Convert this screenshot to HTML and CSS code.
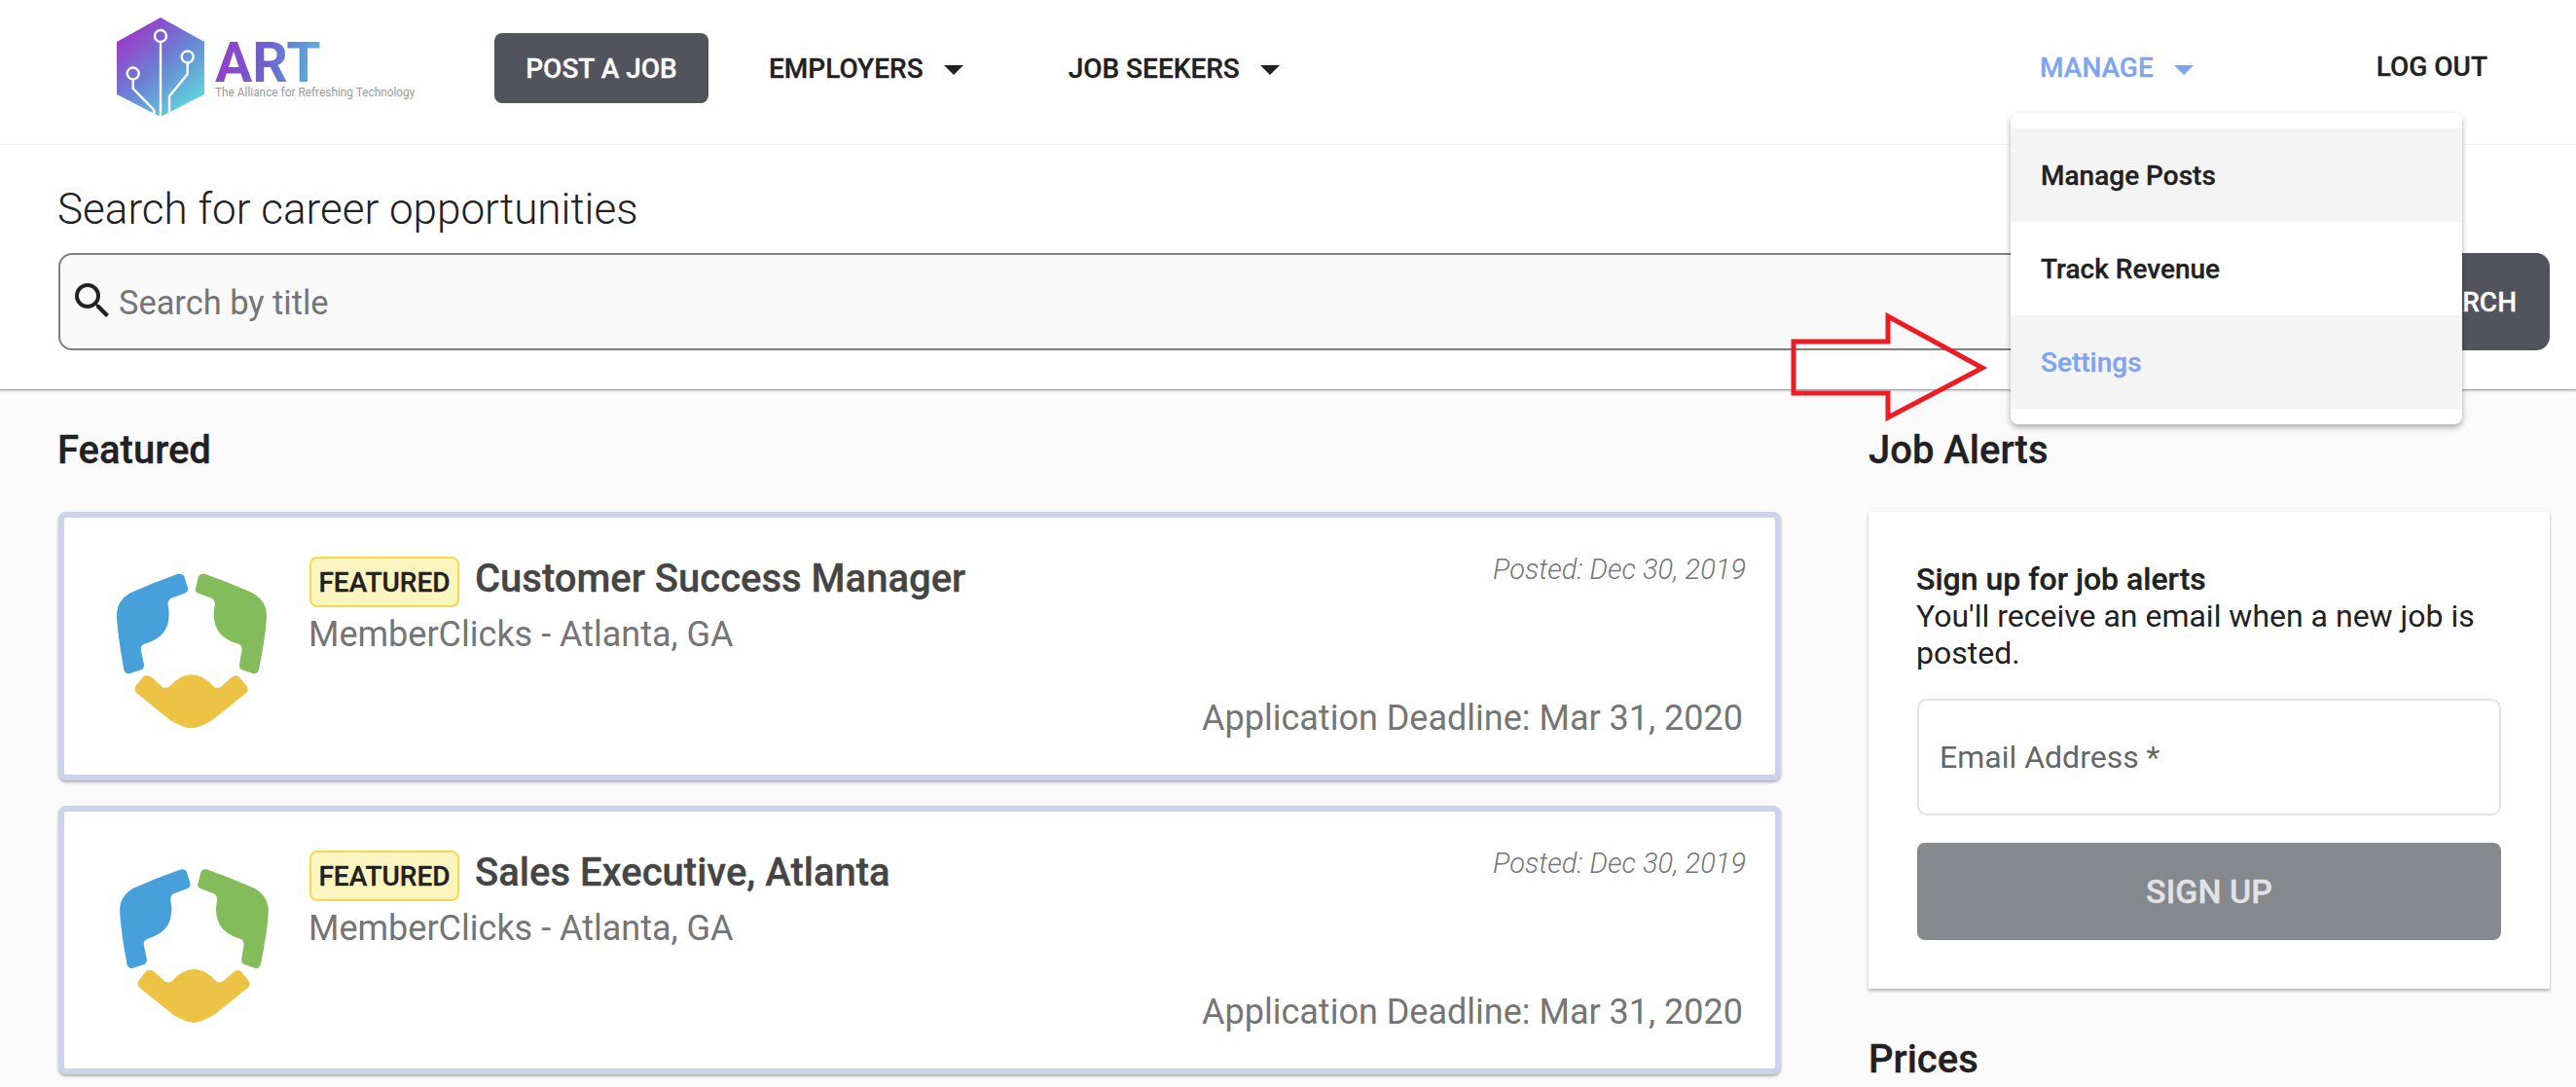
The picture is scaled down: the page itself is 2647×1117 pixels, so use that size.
FILE: index.html
```html
<!DOCTYPE html>
<html lang="en">
<head>
<meta charset="utf-8">
<title>ART Job Board</title>
<link rel="stylesheet" href="styles.css">
</head>
<body>
<svg class="defs" width="0" height="0" aria-hidden="true">
  <defs>
    <linearGradient id="hex" x1="0.1" y1="0.1" x2="0.75" y2="0.95">
      <stop offset="0" stop-color="#a133c6"/>
      <stop offset="0.5" stop-color="#6a7fd3"/>
      <stop offset="1" stop-color="#5fd2dc"/>
    </linearGradient>
    <symbol id="shield" viewBox="70 40 458 474">
      <path fill="#47a0da" d="M255 42Q273 38 277 52L287 85Q289 96 276 101L236 116Q222 124 228 145Q240 232 155 255Q142 260 144 275L153 318Q155 330 145 334L108 346Q96 347 92 335Q72 225 70 170Q68 125 110 100Q180 68 255 42Z"/>
      <path fill="#84bc5c" d="M341 42Q323 38 319 52L311 85Q307 96 320 101L360 116Q374 124 368 145Q356 232 441 255Q454 260 452 275L445 318Q443 330 453 334L488 346Q500 347 504 335Q526 225 528 170Q528 125 486 100Q416 68 341 42Z"/>
      <path fill="#ecc344" d="M152 354Q166 346 180 360L208 386Q220 394 232 384Q262 350 298 349Q335 350 365 384Q376 394 388 386L420 358Q432 348 442 354L468 385Q474 395 466 405L360 490Q320 513 298 513Q275 513 235 490L130 405Q122 395 127 385Z"/>
    </symbol>
  </defs>
</svg>

<header class="topbar">
  <a class="brand" href="#">
    <svg class="brand-mark" viewBox="0 0 90 102">
      <path fill="url(#hex)" d="M45 0L90 25V79L45 102L0 79V25Z"/>
      <g fill="none" stroke="#fff" stroke-width="2.4">
        <circle cx="45" cy="19" r="6"/>
        <circle cx="72.7" cy="40.5" r="6"/>
        <circle cx="16.7" cy="57.5" r="6"/>
        <path d="M45 25V102"/>
        <path d="M72.7 47V58L54 81V98"/>
        <path d="M16.7 64V73L38.3 95V102"/>
      </g>
    </svg>
    <span class="brand-text">
      <span class="brand-name">ART</span>
      <span class="brand-tag">The Alliance for Refreshing Technology</span>
    </span>
  </a>
  <a class="post-btn" href="#">POST A JOB</a>
  <a class="nav-link nav-employers" href="#">EMPLOYERS<i class="caret"></i></a>
  <a class="nav-link nav-seekers" href="#">JOB SEEKERS<i class="caret"></i></a>
  <a class="nav-link nav-manage" href="#">MANAGE<i class="caret"></i></a>
  <a class="nav-link nav-logout" href="#">LOG OUT</a>
</header>

<section class="search-panel">
  <h1 class="search-title">Search for career opportunities</h1>
  <div class="search-row">
    <div class="search-box">
      <svg class="search-icon" viewBox="0 0 24 24"><path fill="#212121" d="M15.5 14h-.79l-.28-.27A6.47 6.47 0 0 0 16 9.5 6.5 6.5 0 1 0 9.5 16c1.61 0 3.09-.59 4.23-1.57l.27.28v.79l5 4.99L20.49 19l-4.99-5zm-6 0C7.01 14 5 11.99 5 9.5S7.01 5 9.5 5 14 7.01 14 9.5 11.99 14 9.5 14z"/></svg>
      <span class="search-placeholder">Search by title</span>
    </div>
    <button class="search-btn">SEARCH</button>
  </div>
</section>

<main class="content">
  <section class="col-main">
    <h2 class="section-title">Featured</h2>
    <article class="job-card">
      <div class="job-logo"><svg class="shield"><use href="#shield"/></svg></div>
      <div class="job-body">
        <div class="job-top">
          <div class="job-heading"><span class="badge">FEATURED</span><span class="job-title">Customer Success Manager</span></div>
          <span class="job-posted">Posted: Dec 30, 2019</span>
        </div>
        <div class="job-org">MemberClicks - Atlanta, GA</div>
        <div class="job-deadline">Application Deadline: Mar 31, 2020</div>
      </div>
    </article>
    <article class="job-card">
      <div class="job-logo job-logo-alt"><svg class="shield shield-alt"><use href="#shield"/></svg></div>
      <div class="job-body">
        <div class="job-top">
          <div class="job-heading"><span class="badge">FEATURED</span><span class="job-title">Sales Executive, Atlanta</span></div>
          <span class="job-posted">Posted: Dec 30, 2019</span>
        </div>
        <div class="job-org">MemberClicks - Atlanta, GA</div>
        <div class="job-deadline">Application Deadline: Mar 31, 2020</div>
      </div>
    </article>
  </section>

  <aside class="col-side">
    <h2 class="section-title">Job Alerts</h2>
    <div class="alert-card">
      <p class="alert-copy"><strong>Sign up for job alerts</strong><br>You'll receive an email when a new job is posted.</p>
      <div class="email-field">Email Address *</div>
      <button class="signup-btn">SIGN UP</button>
    </div>
    <h2 class="section-title prices-title">Prices</h2>
  </aside>
</main>

<nav class="manage-menu">
  <a class="menu-item shaded" href="#">Manage Posts</a>
  <a class="menu-item" href="#">Track Revenue</a>
  <a class="menu-item shaded active" href="#">Settings</a>
</nav>

<svg class="callout" viewBox="0 0 204 112">
  <path fill="none" stroke="#ed1c24" stroke-width="5" d="M3 30H100V4L197 57L100 108V83H3Z"/>
</svg>
</body>
</html>
```
FILE: styles.css
```css
* { box-sizing: border-box; }
html, body { margin: 0; height: 100%; }
body {
  position: relative;
  overflow: hidden;
  background: #fafafa;
  color: #212121;
  font-family: Roboto, "Liberation Sans", sans-serif;
}
a { color: inherit; text-decoration: none; }
.defs { position: absolute; }

/* Medium-weight text renders a little heavier in the reference */
.post-btn, .nav-link, .search-btn, .section-title, .badge, .job-title,
.alert-copy strong, .signup-btn, .menu-item {
  -webkit-text-stroke: .3px currentColor;
}

/* Top bar */
.topbar {
  display: flex;
  align-items: center;
  height: 149px;
  padding-left: 120px;
  background: #fff;
  border-bottom: 1px solid #f4f4f4;
}
.brand { display: flex; align-items: flex-start; width: 388px; height: 102px; margin-top: -11px; }
.brand-mark { width: 90px; height: 102px; flex: none; }
.brand-text { display: flex; flex-direction: column; margin-left: 11px; padding-top: 24px; }
.brand-name {
  font-size: 57px;
  font-weight: 700;
  line-height: 45px;
  width: 110px;
  background: linear-gradient(100deg, #9a3ac8 0%, #6a66d0 50%, #56c0dc 100%);
  -webkit-background-clip: text;
  background-clip: text;
  color: transparent;
}
.brand-tag { font-size: 11.85px; line-height: 16px; color: #9a9a9a; white-space: nowrap; }

.post-btn {
  display: flex;
  align-items: center;
  justify-content: center;
  width: 220px;
  height: 72px;
  margin-top: -8px;
  background: #51545c;
  border-radius: 8px;
  color: #fff;
  font-size: 28px;
  font-weight: 500;
}
.nav-link { display: flex; align-items: center; margin-top: -8px; font-size: 28px; font-weight: 500; white-space: nowrap; }
.nav-employers { margin-left: 62px; }
.nav-seekers { margin-left: 108px; }
.nav-manage { margin-left: auto; margin-top: -9px; color: #7fa5ee; }
.nav-logout { margin-left: 188px; margin-right: 91px; margin-top: -12px; }
.caret {
  width: 0;
  height: 0;
  margin-left: 21px;
  margin-top: 4px;
  border-left: 10px solid transparent;
  border-right: 10px solid transparent;
  border-top: 10px solid currentColor;
}

/* Search panel */
.search-panel {
  height: 252px;
  padding: 41px 27px 0 60px;
  background: #fff;
  border-bottom: 1px solid #a5a5a5;
  box-shadow: 0 1px 2px rgba(0, 0, 0, .2);
}
.search-title { margin: 0 0 0 -1px; font-size: 44px; font-weight: 300; line-height: 50px; }
.search-row { display: flex; gap: 14px; margin-top: 20px; }
.search-box {
  display: flex;
  align-items: center;
  flex: 1;
  height: 100px;
  padding-left: 9px;
  background: #f9f9f9;
  border: 2px solid #808080;
  border-radius: 14px;
}
.search-icon { width: 48px; height: 48px; flex: none; margin-top: -3px; }
.search-placeholder { margin-left: 3px; padding-top: 2px; font-size: 34.4px; color: #757575; }
.search-btn {
  width: 220px;
  height: 100px;
  padding: 0 34px 0 0;
  text-align: right;
  background: #51545c;
  border: 0;
  border-radius: 14px;
  color: #fff;
  font: 500 28px Roboto, "Liberation Sans", sans-serif;
}

/* Content */
.content { display: grid; grid-template-columns: 1770px 700px; column-gap: 90px; padding: 38px 27px 0 60px; }
.section-title { margin: 0; font-size: 40px; font-weight: 500; line-height: 48px; }
.col-main .section-title, .col-side .section-title:first-child { margin-bottom: 39px; }
.col-main .section-title { margin-left: -1px; }

.job-card {
  display: flex;
  height: 276px;
  margin-bottom: 26px;
  background: #fff;
  border: 6px solid #cbd3ea;
  border-radius: 8px;
  box-shadow: 0 2px 3px rgba(0, 0, 0, .3);
}
.job-logo { width: 252px; flex: none; padding: 57px 0 0 54px; }
.job-logo-alt { padding: 59px 0 0 57px; }
.shield { display: block; width: 154px; height: 160px; }
.shield-alt { width: 153px; height: 158px; }
.job-body { flex: 1; display: flex; flex-direction: column; padding: 40px 30px 0 0; }
.job-top { display: flex; justify-content: space-between; align-items: flex-start; }
.job-heading { display: flex; align-items: flex-start; }
.badge {
  display: flex;
  align-items: center;
  justify-content: center;
  width: 154px;
  height: 52px;
  background: #fdf5c0;
  border: 2px solid #f5d94b;
  border-radius: 8px;
  font-size: 28px;
  font-weight: 500;
}
.job-title { margin-left: 16px; margin-top: -2px; font-size: 40px; font-weight: 500; line-height: 50px; color: #454545; }
.job-posted { margin-top: -5px; font-size: 29px; font-weight: 300; font-style: italic; line-height: 36px; color: #757575; }
.job-org { margin-top: 6px; margin-left: -1px; font-size: 36px; line-height: 44px; color: #757575; }
.job-deadline { margin-top: 42px; margin-right: 3px; font-size: 36px; line-height: 44px; text-align: right; color: #757575; }

.alert-card {
  height: 490px;
  padding: 50px 50px 0;
  background: #fff;
  box-shadow: 0 2px 3px rgba(0, 0, 0, .3);
}
.alert-copy { margin: 0 0 0 -1px; font-size: 32px; line-height: 38px; }
.alert-copy strong { font-weight: 500; }
.email-field {
  display: flex;
  align-items: center;
  height: 120px;
  margin-top: 28px;
  padding-left: 21px;
  background: #fff;
  border: 2px solid #e2e2e2;
  border-radius: 10px;
  font-size: 32px;
  color: #666;
}
.signup-btn {
  display: block;
  width: 100%;
  height: 100px;
  margin-top: 28px;
  background: #85888d;
  border: 0;
  border-radius: 8px;
  color: #e2e3e6;
  font: 500 34px Roboto, "Liberation Sans", sans-serif;
}
.prices-title { margin-top: 49px; }

/* Overlays */
.manage-menu {
  position: absolute;
  left: 2066px;
  top: 116px;
  width: 464px;
  padding: 16px 0;
  background: #fff;
  border-radius: 8px;
  box-shadow: 0 3px 6px rgba(0, 0, 0, .32);
}
.menu-item { display: flex; align-items: center; height: 96px; padding-left: 31px; font-size: 28px; font-weight: 500; }
.shaded { background: #f4f4f4; }
.active { color: #7fa5ee; }
.callout { position: absolute; left: 1840px; top: 321px; width: 204px; height: 112px; }
```
